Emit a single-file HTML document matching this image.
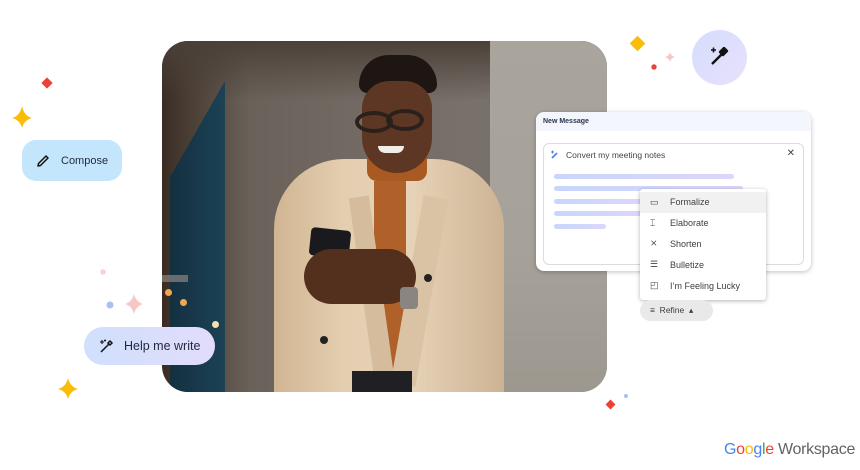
<!DOCTYPE html>
<html><head><meta charset="utf-8"><style>
*{margin:0;padding:0;box-sizing:border-box}
body{width:860px;height:470px;background:#fff;position:relative;overflow:hidden;font-family:"Liberation Sans",Arial,sans-serif;color:#202124}
.abs{position:absolute}
.photo{left:162px;top:41px;width:445px;height:351px;border-radius:26px;overflow:hidden;background:linear-gradient(90deg,#3a2c22 0%,#4a3e34 6%,#6a625a 20%,#736b63 45%,#78706a 70%,#7a736c 100%)}
.chip{border-radius:14px;display:flex;align-items:center;font-size:13px}
.menu div{height:20.8px;display:flex;align-items:center;font-size:9px;color:#3c4043;padding-left:30px;position:relative}
.menu div span{position:absolute;left:10px;font-size:9px;color:#444}
.bar{position:absolute;height:5px;border-radius:3px;background:linear-gradient(90deg,#c8d6fb,#dcd6fb)}
</style></head><body>
<div class="abs photo">
 <div class="abs" style="left:0;top:0;width:445px;height:60px;background:linear-gradient(180deg,#4a4038,rgba(0,0,0,0))"></div>
 <div class="abs" style="left:8px;top:40px;width:55px;height:320px;background:linear-gradient(90deg,#143040,#1c4256);clip-path:polygon(0 30%,100% 0,100% 100%,0 100%)"></div>
 <div class="abs" style="left:328px;top:0;width:117px;height:351px;background:linear-gradient(180deg,#a9a49c,#a6a199 60%,#9d988f)"></div>
 <div class="abs" style="left:0;top:234px;width:26px;height:7px;background:#8a8580;opacity:.7"></div>
 <div class="abs" style="left:3px;top:248px;width:7px;height:7px;border-radius:50%;background:#f0a850"></div>
 <div class="abs" style="left:18px;top:258px;width:7px;height:7px;border-radius:50%;background:#f0a850"></div>
 <div class="abs" style="left:50px;top:280px;width:7px;height:7px;border-radius:50%;background:#f6e0b0"></div>
 <!-- bag strap -->
 <div class="abs" style="left:162px;top:122px;width:30px;height:110px;background:#a0582a;transform:rotate(18deg)"></div>
 <div class="abs" style="left:116px;top:270px;width:30px;height:45px;border-radius:10px;background:#9a5426"></div>
 <!-- coat -->
 <div class="abs" style="left:112px;top:118px;width:230px;height:240px;border-radius:70px 70px 0 0;background:linear-gradient(90deg,#d0b592,#e3ceb0 30%,#e6d2b6 60%,#cdb394)"></div>
 <div class="abs" style="left:205px;top:100px;width:60px;height:40px;border-radius:10px;background:#a85a22"></div>
 <div class="abs" style="left:212px;top:140px;width:32px;height:195px;background:#b0612a"></div>
 <div class="abs" style="left:200px;top:155px;width:20px;height:190px;background:#d4bc9c;transform:rotate(-8deg)"></div>
 <div class="abs" style="left:245px;top:155px;width:25px;height:190px;background:#d9c3a4;transform:rotate(10deg)"></div>
 <div class="abs" style="left:190px;top:330px;width:60px;height:21px;background:#1f1f24"></div>
 <div class="abs" style="left:262px;top:233px;width:8px;height:8px;border-radius:50%;background:#222"></div>
 <div class="abs" style="left:158px;top:295px;width:8px;height:8px;border-radius:50%;background:#222"></div>
 <!-- head -->
 <div class="abs" style="left:197px;top:14px;width:78px;height:38px;border-radius:36px 36px 10px 10px;background:#1d1612"></div>
 <div class="abs" style="left:200px;top:40px;width:70px;height:92px;border-radius:28px 28px 36px 36px;background:#5e3624"></div>
 <div class="abs" style="left:193px;top:70px;width:38px;height:22px;border-radius:50%;border:4px solid #2a201c"></div>
 <div class="abs" style="left:224px;top:68px;width:38px;height:22px;border-radius:50%;border:4px solid #2a201c"></div>
 <div class="abs" style="left:216px;top:105px;width:26px;height:7px;border-radius:0 0 10px 10px;background:#f0ece6"></div>
 <!-- hands/phone -->
 <div class="abs" style="left:148px;top:188px;width:40px;height:28px;border-radius:4px;background:#1a1a1e;transform:rotate(6deg)"></div>
 <div class="abs" style="left:142px;top:208px;width:112px;height:55px;border-radius:28px;background:#532f1e"></div>
 <div class="abs" style="left:238px;top:246px;width:18px;height:22px;border-radius:4px;background:#8a8580"></div>
</div>
<!-- sparkles -->
<svg class="abs" style="left:0;top:0" width="860" height="470">
 <path d="M22 106 Q24 116 32 118 Q24 120 22 128 Q20 120 12 118 Q20 116 22 106Z" fill="#fbbc04"/>
 <path d="M68 378 Q70 387 78 389 Q70 391 68 399 Q66 391 58 389 Q66 387 68 378Z" fill="#fbbc04"/>
 <path d="M134 294 Q136 302 143 304 Q136 306 134 314 Q132 306 125 304 Q132 302 134 294Z" fill="#f7c6c6"/>
 <path d="M670 52 Q671 56 675 57 Q671 58 670 62 Q669 58 665 57 Q669 56 670 52Z" fill="#f7c6c6"/>
 <rect x="43" y="79" width="8" height="8" fill="#ea4335" transform="rotate(45 47 83)"/>
 <rect x="632" y="38" width="11" height="11" fill="#fbbc04" transform="rotate(45 637.5 43.5)"/>
 <rect x="607" y="401" width="7" height="7" fill="#ea4335" transform="rotate(45 610.5 404.5)"/>
 <circle cx="654" cy="67" r="2.7" fill="#ea4335"/>
 <circle cx="103" cy="272" r="2.7" fill="#f8d0d0"/>
 <circle cx="110" cy="305" r="3.5" fill="#a8c0f8"/>
 <circle cx="626" cy="396" r="2" fill="#a8c0f8"/>
</svg>
<div class="abs" style="left:692px;top:30px;width:55px;height:55px;border-radius:50%;background:linear-gradient(135deg,#d4defd,#e8e0fb)"></div>
<svg class="abs" style="left:706px;top:44px" width="26" height="26" viewBox="0 0 26 26"><path d="M6 20 L16 10 M14 8 L18 4 L21 7 L17 11 Z" stroke="#111" stroke-width="2.4" fill="#111" stroke-linejoin="round"/><path d="M5 6h5M7.5 3.5v5" stroke="#111" stroke-width="1.6"/></svg>
<!-- compose -->
<div class="abs chip" style="left:22px;top:140px;width:100px;height:41px;background:#c3e6fd">
 <svg style="margin-left:13px" width="16" height="16" viewBox="0 0 16 16"><path d="M3 13 L3.5 10.5 L11 3 L13 5 L5.5 12.5 Z" fill="none" stroke="#111" stroke-width="1.5" stroke-linejoin="round"/></svg>
 <span style="margin-left:10px;font-size:11px;color:#1f2a37">Compose</span></div>
<div class="abs chip" style="left:84px;top:327px;width:131px;height:38px;border-radius:19px;background:linear-gradient(90deg,#cfe0fd,#e2dcfb)">
 <svg style="margin-left:14px" width="17" height="17" viewBox="0 0 17 17"><path d="M3 14 L11 6 M10 5 L12 3 L14 5 L12 7Z" stroke="#111" stroke-width="1.5" fill="none"/><path d="M2 4h4M4 2v4M7 1.5v2M6 2.5h2" stroke="#111" stroke-width="1.1"/></svg>
 <span style="margin-left:9px;font-size:12.5px;color:#1f2a37">Help me write</span></div>
<!-- card -->
<div class="abs" style="left:536px;top:112px;width:275px;height:159px;border-radius:8px;background:#fff;box-shadow:0 1px 5px rgba(0,0,0,.25)">
 <div style="height:19px;background:#f3f6fc;border-radius:8px 8px 0 0;font-size:7px;font-weight:bold;color:#2a3550;padding:6px 0 0 7px">New Message</div>
 <div class="abs" style="left:7px;top:31px;width:261px;height:122px;border:1px solid #dadce0;border-radius:6px">
  <div style="font-size:8.5px;color:#444;padding:6px 0 0 22px">Convert my meeting notes</div>
  <svg class="abs" style="left:6px;top:6px" width="10" height="10"><path d="M2 8 L7 3" stroke="#4a7ce8" stroke-width="1.6"/><path d="M1 2h3M2.5 0.5v3" stroke="#4a7ce8"/></svg>
  <div class="abs" style="right:8px;top:4px;font-size:10px;color:#444">✕</div>
  <div class="bar" style="left:10px;top:30px;width:180px"></div>
  <div class="bar" style="left:10px;top:42px;width:189px"></div>
  <div class="bar" style="left:10px;top:55px;width:90px"></div>
  <div class="bar" style="left:10px;top:67px;width:90px"></div>
  <div class="bar" style="left:10px;top:80px;width:52px"></div>
 </div>
</div>
<div class="abs menu" style="left:640px;top:189px;width:126px;height:111px;background:#fff;border-radius:3px;box-shadow:0 1px 4px rgba(0,0,0,.3);padding-top:3px">
 <div style="background:#f1f1f1"><span>▭</span>Formalize</div>
 <div><span>⌶</span>Elaborate</div>
 <div><span>⨯</span>Shorten</div>
 <div><span>☰</span>Bulletize</div>
 <div><span>◰</span>I’m Feeling Lucky</div>
</div>
<div class="abs" style="left:640px;top:300px;width:73px;height:21px;border-radius:11px;background:#e9e9e9;font-size:8.5px;color:#3c4043;display:flex;align-items:center;padding-left:10px">≡&nbsp;&nbsp;Refine&nbsp;&nbsp;▴</div>
<div class="abs" style="left:724px;top:441px;font-size:16px;letter-spacing:-0.3px"><span style="color:#4285f4">G</span><span style="color:#ea4335">o</span><span style="color:#fbbc04">o</span><span style="color:#4285f4">g</span><span style="color:#34a853">l</span><span style="color:#ea4335">e</span><span style="color:#5f6368"> Workspace</span></div>
</body></html>
